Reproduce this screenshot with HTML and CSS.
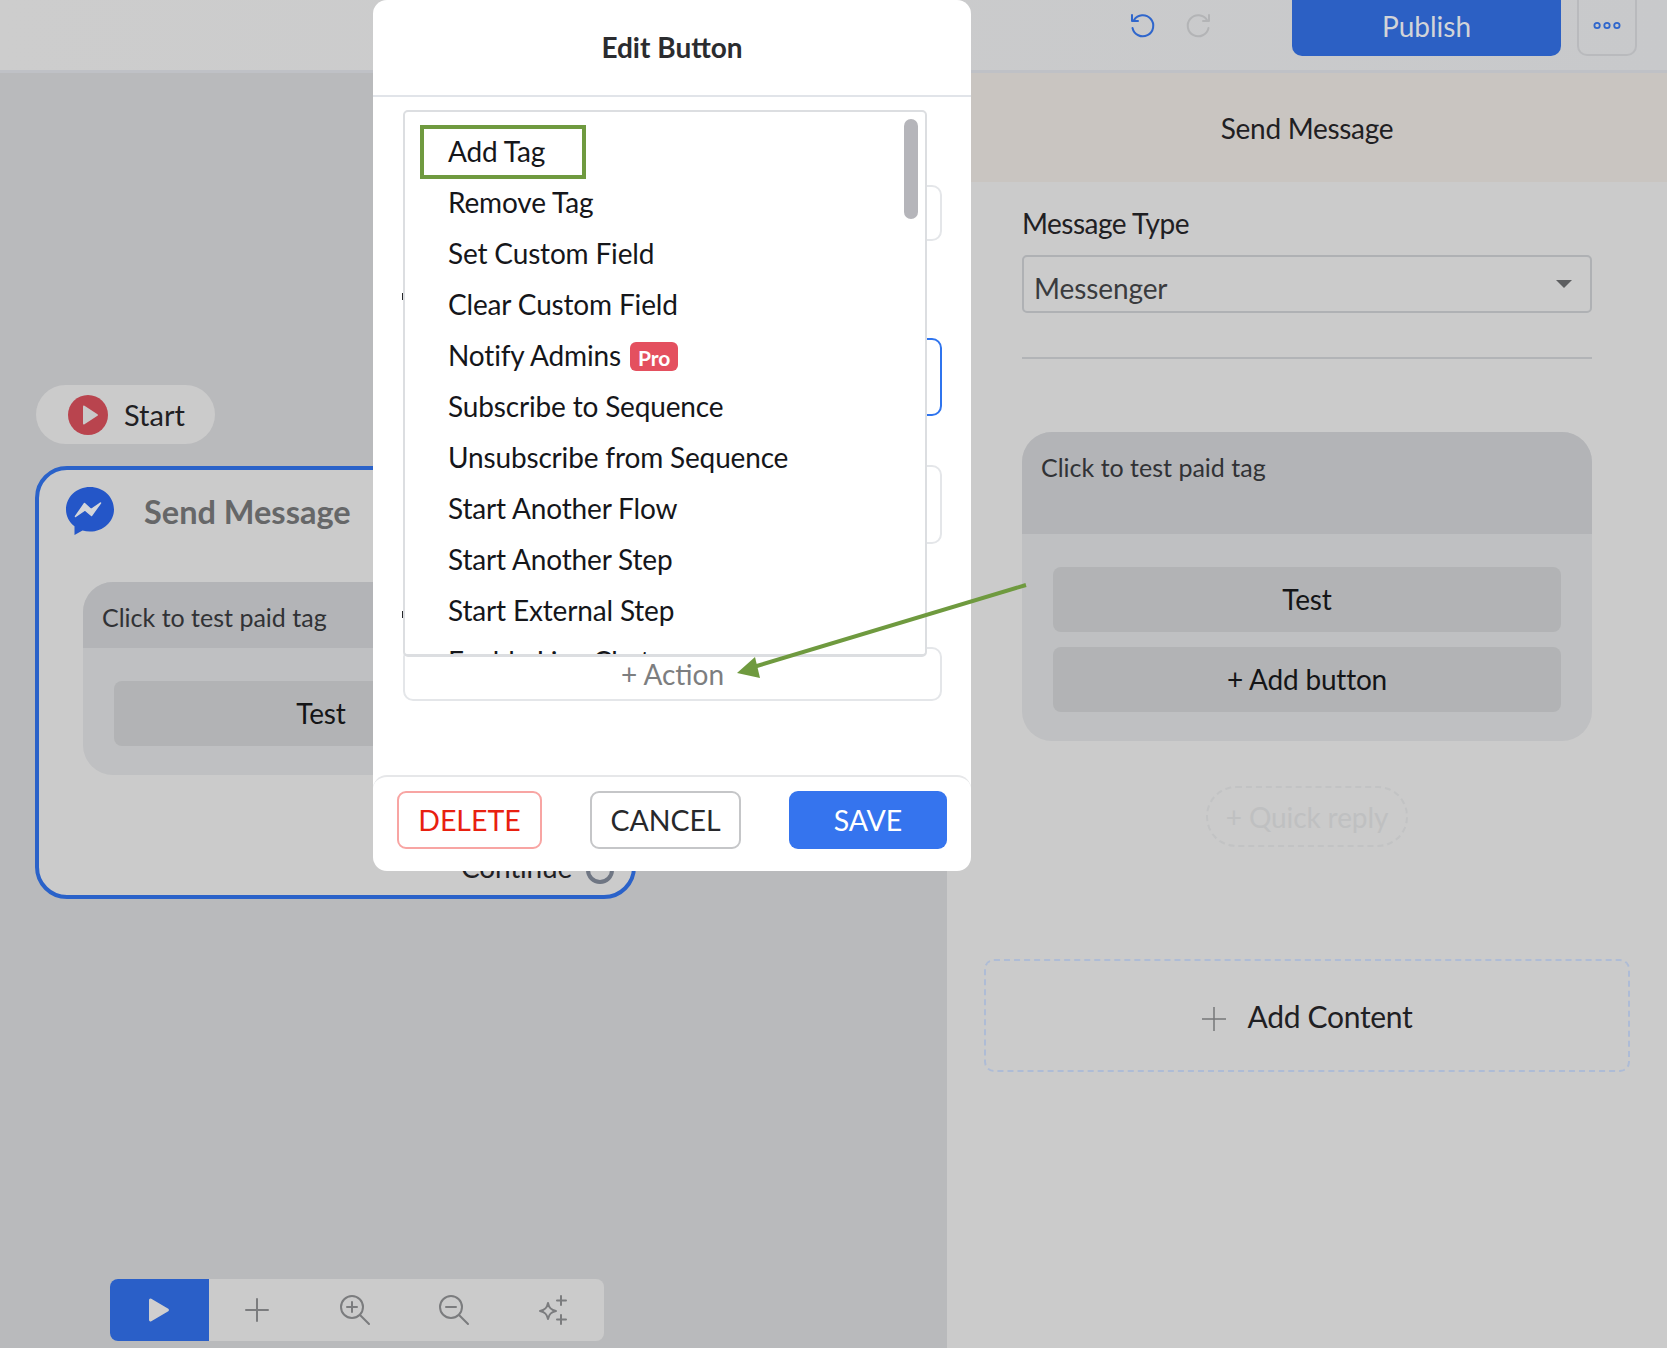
FILE: index.html

```html
<!DOCTYPE html>
<html lang="en">
<head>
  <meta charset="UTF-8">
  <title>Edit Button</title>
  <link rel="stylesheet" href="styles.css">
</head>
<body>
  <div class="app">
    <header class="topbar">
      <svg class="hist-icon" viewBox="0 0 28 28" width="28" height="28" fill="none" stroke="#2f66cc" stroke-width="2" stroke-linecap="round" stroke-linejoin="round">
        <path d="M6 8a10.5 10.5 0 1 1-1.5 8"/><path d="M4 3v6h6"/>
      </svg>
      <svg class="hist-icon" viewBox="0 0 28 28" width="28" height="28" fill="none" stroke="#b3b4b6" stroke-width="2" stroke-linecap="round" stroke-linejoin="round">
        <path d="M22 8a10.5 10.5 0 1 0 1.5 8"/><path d="M24 3v6h-6"/>
      </svg>
      <button class="publish">Publish</button>
      <button class="more">
        <svg viewBox="0 0 32 10" width="30" height="9" fill="none" stroke="#2f66cc" stroke-width="2"><circle cx="5" cy="5" r="3"/><circle cx="16" cy="5" r="3"/><circle cx="27" cy="5" r="3"/></svg>
      </button>
    </header>

    <div class="workspace">
      <main class="canvas">
        <div class="start-node">
          <svg viewBox="0 0 40 40" width="40" height="40"><circle cx="20" cy="20" r="20" fill="#b9444e"/><path d="M15 11.5v17a1 1 0 0 0 1.5.8l13-8.5a1 1 0 0 0 0-1.6l-13-8.500a1 1 0 0 0-1.500.8z" fill="#c9c9c9"/></svg>
          <span>Start</span>
        </div>

        <div class="send-node">
          <div class="send-head">
            <svg viewBox="0 0 48 50" width="48" height="50"><path d="M24 1C10.700 1 0 10.900 0 23.500c0 7 3.300 12.800 8.500 16.800V49l8-4.400c2.400.7 5 1 7.500 1 13.300 0 24-10 24-22.100C48 10.900 37.300 1 24 1z" fill="#2456c8"/><path d="M9.500 30.500l9-13 6.500 6 9.500-6.500-9 12.500-6.500-5.500z" fill="#d4d6da" stroke="#d4d6da" stroke-width="1.500" stroke-linejoin="round"/></svg>
            <span>Send Message</span>
          </div>
          <div class="msg-card narrow">
            <div class="msg-card-head">Click to test paid tag</div>
            <div class="msg-card-body">
              <div class="msg-btn">Test</div>
            </div>
          </div>
          <div class="continue"><span>Continue</span><i></i></div>
        </div>

        <div class="zoom-bar">
          <div class="zoom-play">
            <svg viewBox="0 0 24 26" width="24" height="26"><path d="M2 3v20a1.500 1.500 0 0 0 2.300 1.200l17-10a1.500 1.500 0 0 0 0-2.400l-17-10A1.500 1.500 0 0 0 2 3z" fill="#cfcfcf"/></svg>
          </div>
          <div class="zoom-item">
            <svg viewBox="0 0 28 28" width="28" height="28" fill="none" stroke="#7b7c7e" stroke-width="2" stroke-linecap="round"><path d="M14 3v22M3 14h22"/></svg>
          </div>
          <div class="zoom-item">
            <svg viewBox="0 0 32 32" width="32" height="32" fill="none" stroke="#7b7c7e" stroke-width="2" stroke-linecap="round"><circle cx="13" cy="13" r="11"/><path d="M8 13h10M13 8v10M21 21l9 9"/></svg>
          </div>
          <div class="zoom-item">
            <svg viewBox="0 0 32 32" width="32" height="32" fill="none" stroke="#7b7c7e" stroke-width="2" stroke-linecap="round"><circle cx="13" cy="13" r="11"/><path d="M8 13h10M21 21l9 9"/></svg>
          </div>
          <div class="zoom-item">
            <svg viewBox="0 0 32 32" width="32" height="32" fill="none" stroke="#7b7c7e" stroke-width="2" stroke-linecap="round" stroke-linejoin="round"><path d="M11 9c1 5 3 7 8 8-5 1-7 3-8 8-1-5-3-7-8-8 5-1 7-3 8-8z"/><path d="M24 2v9M20 6.500h9M24 21v9M20 25.500h9"/></svg>
          </div>
        </div>
      </main>

      <aside class="panel">
        <div class="panel-head">Send Message</div>
        <div class="panel-body">
          <label class="type-label">Message Type</label>
          <div class="type-select"><span>Messenger</span><i class="caret"></i></div>
          <hr class="panel-rule">
          <div class="msg-card wide">
            <div class="msg-card-head">Click to test paid tag</div>
            <div class="msg-card-body">
              <div class="msg-btn">Test</div>
              <div class="msg-btn">+ Add button</div>
            </div>
          </div>
          <div class="quick-reply">+ Quick reply</div>
        </div>
        <div class="add-content">
          <svg viewBox="0 0 26 26" width="26" height="26" fill="none" stroke="#77787a" stroke-width="1.500"><path d="M13 1v24M1 13h24"/></svg>
          <span>Add Content</span>
        </div>
      </aside>
    </div>
  </div>

  <section class="modal">
    <h2 class="modal-title">Edit Button</h2>
    <div class="modal-body">
      <div class="field short"></div>
      <div class="field-gap"></div>
      <div class="field active"></div>
      <div class="field mid"></div>
      <div class="field-gap lower"></div>
      <div class="field action">+ Action</div>

      <div class="action-menu">
        <ul>
          <li class="picked">Add Tag</li>
          <li>Remove Tag</li>
          <li>Set Custom Field</li>
          <li>Clear Custom Field</li>
          <li>Notify Admins <b class="pro">Pro</b></li>
          <li>Subscribe to Sequence</li>
          <li>Unsubscribe from Sequence</li>
          <li>Start Another Flow</li>
          <li>Start Another Step</li>
          <li>Start External Step</li>
          <li>Enable Live Chat</li>
        </ul>
        <div class="scroll-thumb"></div>
      </div>
    </div>
    <footer class="modal-foot">
      <button class="btn danger">DELETE</button>
      <button class="btn plain">CANCEL</button>
      <button class="btn primary">SAVE</button>
    </footer>
  </section>

  <svg class="callout" viewBox="0 0 1667 1348" width="1667" height="1348">
    <path d="M1026 585 L750 668" stroke="#6f9a3f" stroke-width="4" fill="none"/>
    <path d="M737 673 L755 657 L760 678 Z" fill="#6f9a3f"/>
  </svg>
</body>
</html>
```

FILE: styles.css

```css
*, *::before, *::after {
  box-sizing: border-box;
}
body {
  margin: 0;
  width: 1667px;
  height: 1348px;
  overflow: hidden;
  position: relative;
  font-family: Lato, "Noto Sans", sans-serif;
  color: #1f2023;
  background: #b9babc;
}
button {
  font-family: inherit;
}
.app {
  display: flex;
  flex-direction: column;
  height: 100%;
}

/* top bar */
.topbar {
  height: 73px;
  flex: none;
  display: flex;
  align-items: flex-start;
  padding-right: 30px;
  background: linear-gradient(90deg, #cdcdcd, #c8c9cb);
  border-bottom: 3px solid #bfc1c6;
}
.hist-icon {
  margin-top: 12px;
  margin-right: 29px;
}
.hist-icon:first-child {
  margin-left: 1128px;
}
.publish {
  width: 269px;
  height: 56px;
  margin-left: 50px;
  padding: 0 0 4px;
  border: 0;
  border-radius: 0 0 10px 10px;
  background: #2c60c4;
  color: #d2d4d8;
  font-size: 28px;
}
.more {
  width: 60px;
  height: 56px;
  margin-left: 16px;
  padding: 0 0 4px;
  background: transparent;
  border: 2px solid #b9babd;
  border-top: 0;
  border-radius: 0 0 10px 10px;
}

.workspace {
  flex: 1;
  display: flex;
  min-height: 0;
}

/* canvas */
.canvas {
  width: 947px;
  flex: none;
  position: relative;
  background: #b9babc;
}
.start-node {
  position: absolute;
  left: 36px;
  top: 312px;
  width: 179px;
  height: 59px;
  display: flex;
  align-items: center;
  gap: 16px;
  padding-left: 32px;
  background: #cbcbcb;
  border-radius: 30px;
  font-size: 29px;
}
.send-node {
  position: absolute;
  left: 35px;
  top: 393px;
  width: 601px;
  height: 433px;
  background: #cbcbcb;
  border: 4px solid #2a62c9;
  border-radius: 32px;
  padding: 16px 44px;
}
.send-head {
  display: flex;
  align-items: center;
  gap: 30px;
  margin-left: -17px;
  font-size: 32.5px;
  font-weight: 700;
  color: #666768;
}
.msg-card {
  margin-top: 46px;
  border-radius: 30px;
  overflow: hidden;
  background: #bfc0c2;
}
.msg-card.narrow {
  width: 476px;
}
.msg-card-head {
  height: 66px;
  padding: 20px 19px 0;
  background: #b3b4b7;
  font-size: 25px;
  color: #313235;
}
.msg-card-body {
  display: flex;
  flex-direction: column;
  gap: 15px;
  padding: 33px 31px 29px;
}
.msg-btn {
  height: 65px;
  line-height: 65px;
  text-align: center;
  border-radius: 8px;
  background: #b2b3b5;
  font-size: 28px;
  letter-spacing: -0.2px;
  color: #141517;
}
.continue {
  position: absolute;
  right: 18px;
  bottom: 11px;
  display: flex;
  align-items: center;
  gap: 14px;
  font-size: 28px;
  letter-spacing: -0.2px;
}
.continue i {
  width: 28px;
  height: 28px;
  margin-bottom: -6px;
  border: 4px solid #6f7683;
  border-radius: 50%;
}
.zoom-bar {
  position: absolute;
  left: 110px;
  top: 1206px;
  width: 494px;
  height: 62px;
  display: flex;
  background: #cbcbcb;
  border-radius: 8px;
  overflow: hidden;
}
.zoom-play {
  width: 99px;
  display: flex;
  align-items: center;
  justify-content: center;
  background: #2a5fc8;
}
.zoom-item {
  width: 99px;
  padding-right: 3px;
  display: flex;
  align-items: center;
  justify-content: center;
}

/* right panel */
.panel {
  flex: 1;
  background: #cbcbcb;
}
.panel-head {
  height: 109px;
  line-height: 110px;
  text-align: center;
  background: #c9c5c1;
  font-size: 28px;
  letter-spacing: -0.3px;
}
.panel-body {
  padding: 23px 75px 0 75px;
}
.type-label {
  display: block;
  font-size: 28px;
  line-height: 36px;
  letter-spacing: -0.5px;
}
.type-select {
  height: 58px;
  margin-top: 14px;
  padding: 8px 10px 0;
  display: flex;
  align-items: center;
  justify-content: space-between;
  border: 2px solid #afb1b4;
  border-radius: 5px;
  font-size: 28px;
  letter-spacing: -0.1px;
  color: #3a3b3e;
}
.caret {
  width: 0;
  height: 0;
  margin: -8px 8px 0 0;
  border: 8px solid transparent;
  border-top-color: #5d5e60;
  border-bottom: 0;
}
.panel-rule {
  margin: 44px 0 0;
  border: 0;
  border-top: 2px solid #b2b4b7;
}
.msg-card.wide {
  margin-top: 73px;
}
.msg-card.wide .msg-card-head {
  height: 102px;
  padding-top: 20px;
}
.quick-reply {
  width: 202px;
  height: 61px;
  line-height: 59px;
  margin: 45px auto 0;
  text-align: center;
  border: 2px dashed #c2c3c4;
  border-radius: 30px;
  font-size: 28px;
  letter-spacing: -0.1px;
  color: #bfc0c1;
}
.add-content {
  height: 113px;
  margin: 112px 37px 0;
  display: flex;
  align-items: center;
  justify-content: center;
  gap: 20px;
  border: 2px dashed #aebcd6;
  border-radius: 10px;
  font-size: 30px;
  letter-spacing: -0.3px;
}
.add-content svg {
  margin-top: 6px;
}

/* edit dialog */
.modal {
  position: absolute;
  left: 373px;
  top: 0;
  width: 598px;
  height: 871px;
  display: flex;
  flex-direction: column;
  background: #fff;
  border-radius: 14px;
}
.modal-title {
  height: 97px;
  flex: none;
  margin: 0;
  line-height: 94px;
  text-align: center;
  font-size: 28px;
  font-weight: 700;
  color: #2b2c2f;
  border-bottom: 2px solid #e1e4e9;
}
.modal-body {
  flex: 1;
  position: relative;
  padding: 88px 29px 0 30px;
}
.field {
  border: 2px solid #e4e6e9;
  border-radius: 10px;
}
.field.short {
  height: 56px;
}
.field-gap {
  position: relative;
  height: 97px;
}
/* tips of the labels that stick out from under the open menu */
.field-gap::before {
  content: "";
  position: absolute;
  left: -1px;
  top: 52px;
  width: 2px;
  height: 7px;
  background: #26272a;
}
.field-gap.lower {
  height: 103px;
}
.field-gap.lower::before {
  top: 67px;
}
.field.active {
  height: 78px;
  border-color: #2f74ee;
}
.field.mid {
  height: 79px;
  margin-top: 49px;
}
.field.action {
  height: 54px;
  line-height: 50px;
  text-align: center;
  font-size: 28px;
  color: #7d7e80;
}
.action-menu {
  position: absolute;
  left: 30px;
  top: 13px;
  width: 524px;
  height: 547px;
  overflow: hidden;
  background: #fff;
  border: 2px solid #dcdee1;
  border-bottom-width: 3px;
  border-radius: 5px;
}
.action-menu ul {
  margin: 0;
  padding: 14px 0 0 43px;
  list-style: none;
}
.action-menu li {
  height: 51px;
  line-height: 51px;
  font-size: 28px;
  letter-spacing: -0.16px;
  color: #15161a;
  white-space: nowrap;
}
.picked {
  position: relative;
}
.picked::before {
  content: "";
  position: absolute;
  left: -28px;
  top: -1px;
  width: 166px;
  height: 54px;
  border: 4px solid #6f9a3f;
}
.pro {
  display: inline-block;
  height: 29px;
  padding: 0 8px;
  margin-left: 2px;
  line-height: 31px;
  vertical-align: 0;
  font-size: 21px;
  font-weight: 700;
  letter-spacing: 0;
  color: #fff;
  background: #e4505f;
  border-radius: 6px;
}
.scroll-thumb {
  position: absolute;
  top: 7px;
  right: 7px;
  width: 14px;
  height: 100px;
  background: #b5b5ba;
  border-radius: 7px;
}
.modal-foot {
  height: 96px;
  flex: none;
  display: flex;
  align-items: flex-start;
  justify-content: space-between;
  padding: 14px 24px 0 24px;
  border-top: 2px solid #e6e7e9;
  border-radius: 14px;
}
.btn {
  height: 58px;
  border-radius: 9px;
  font-size: 28.5px;
  background: #fff;
}
.btn.danger {
  width: 145px;
  border: 2px solid #f8a5a3;
  color: #e8200f;
}
.btn.plain {
  width: 151px;
  border: 2px solid #c5c6c8;
  color: #27282b;
}
.btn.primary {
  width: 158px;
  border: 0;
  background: #3574ee;
  color: #fff;
}
.callout {
  position: absolute;
  left: 0;
  top: 0;
  pointer-events: none;
}
```
